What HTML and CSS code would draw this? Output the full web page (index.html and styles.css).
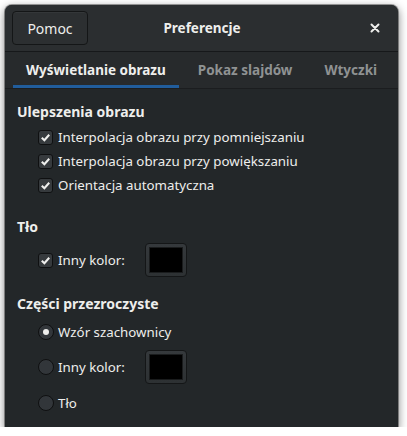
FILE: index.html
```html
<!DOCTYPE html>
<html lang="pl">
<head>
<meta charset="utf-8">
<title>Preferencje</title>
<link rel="stylesheet" href="styles.css">
</head>
<body>
<div class="window">
  <header class="headerbar">
    <button class="btn">Pomoc</button>
    <div class="title">Preferencje</div>
    <button class="close" aria-label="Zamknij">
      <svg width="10" height="10" viewBox="0 0 10 10"><path d="M1.5 1.5 L8.5 8.5 M8.5 1.5 L1.5 8.5" stroke="#eeeeec" stroke-width="2" stroke-linecap="round"/></svg>
    </button>
  </header>
  <nav class="tabs">
    <div class="tab active">Wyświetlanie obrazu</div>
    <div class="tab">Pokaz slajdów</div>
    <div class="tab">Wtyczki</div>
  </nav>
  <main class="content">
    <section class="group g-enh">
      <h2 class="heading">Ulepszenia obrazu</h2>
      <div class="row"><span class="check"><svg viewBox="0 0 14 14"><path d="M3 7.2 L5.8 10 L11 4" fill="none" stroke="#eeeeec" stroke-width="2.2"/></svg></span>Interpolacja obrazu przy pomniejszaniu</div>
      <div class="row"><span class="check"><svg viewBox="0 0 14 14"><path d="M3 7.2 L5.8 10 L11 4" fill="none" stroke="#eeeeec" stroke-width="2.2"/></svg></span>Interpolacja obrazu przy powiększaniu</div>
      <div class="row"><span class="check"><svg viewBox="0 0 14 14"><path d="M3 7.2 L5.8 10 L11 4" fill="none" stroke="#eeeeec" stroke-width="2.2"/></svg></span>Orientacja automatyczna</div>
    </section>
    <section class="group g-bg">
      <h2 class="heading">Tło</h2>
      <div class="row tall"><span class="check"><svg viewBox="0 0 14 14"><path d="M3 7.2 L5.8 10 L11 4" fill="none" stroke="#eeeeec" stroke-width="2.2"/></svg></span><span class="lbl">Inny kolor:</span><span class="color"><span class="swatch"></span></span></div>
    </section>
    <section class="group g-tr">
      <h2 class="heading">Części przezroczyste</h2>
      <div class="row radio-row"><span class="radio on"><span class="dot"></span></span>Wzór szachownicy</div>
      <div class="row tall2"><span class="radio"></span><span class="lbl">Inny kolor:</span><span class="color"><span class="swatch"></span></span></div>
      <div class="row radio-row"><span class="radio"></span>Tło</div>
    </section>
  </main>
</div>
</body>
</html>
```
FILE: styles.css
```css
* { box-sizing: border-box; }
html, body { margin: 0; padding: 0; background: #ffffff; }
body { font-family: "Noto Sans", "DejaVu Sans", sans-serif; font-size: 13.3px; color: #eeeeec; }

.window {
  margin: 5px 0 0 5px;
  width: 393px;
  height: 422px;
  background: #232729;
  border-radius: 7px 7px 0 0;
  box-shadow: 0 3px 9px 1px rgba(0,0,0,0.45), 0 0 0 1px rgba(0,0,0,0.35);
  overflow: hidden;
  display: flex;
  flex-direction: column;
}

.headerbar {
  flex: 0 0 47px;
  background: #2b2e30;
  border-bottom: 1px solid #16181a;
  display: grid;
  grid-template-columns: 1fr auto 1fr;
  align-items: center;
  padding: 0 6px 0 7px;
}
.btn {
  justify-self: start;
  width: 76px;
  height: 34px;
  background: #2c2f31;
  border: 1px solid #141617;
  border-radius: 4px;
  color: #eeeeec;
  font: inherit;
  font-size: 14px;
  box-shadow: inset 0 1px rgba(255,255,255,0.04);
}
.title { font-weight: bold; font-size: 13.5px; }
.close {
  justify-self: end;
  width: 34px; height: 34px;
  background: none; border: none; padding: 0;
  display: flex; align-items: center; justify-content: center;
}

.tabs {
  flex: 0 0 37px;
  background: #272a2c;
  border-bottom: 1px solid #1b1d1f;
  display: flex;
  padding: 0 0 0 8px;
}
.tab {
  font-weight: bold;
  font-size: 13.5px;
  color: #8f9293;
  padding: 3px 13px 0 13px;
  display: flex;
  align-items: center;
  border-bottom: 3px solid transparent;
}
.tab.active { color: #eeeeec; border-bottom-color: #215d9c; }
.tab + .tab { margin-left: 6px; }

.content { padding: 12px 12px 0 12px; }
.g-enh { margin-bottom: 19px; }
.g-bg { margin-bottom: 13px; }
.heading {
  margin: 0 0 2px 0;
  font-size: 14px;
  font-weight: bold;
  line-height: 22px;
}
.row {
  display: flex;
  align-items: center;
  height: 24px;
  padding-left: 21px;
  white-space: nowrap;
}
.row.tall { height: 40px; }
.row.tall2 { height: 42px; }
.radio-row { height: 29px; }
.check {
  width: 15px; height: 15px;
  border: 1px solid #0f1011;
  background: #363a3d;
  border-radius: 3px;
  margin-right: 5px;
  display: inline-flex;
  flex: 0 0 auto;
}
.check svg { width: 13px; height: 13px; }
.radio {
  width: 16px; height: 16px;
  border: 1px solid #0f1011;
  background: #32363a;
  border-radius: 50%;
  margin-right: 4px;
  display: inline-flex;
  align-items: center;
  justify-content: center;
  flex: 0 0 auto;
}
.radio .dot { width: 6px; height: 6px; border-radius: 50%; background: #eeeeec; }
.lbl { width: 87px; }
.color {
  width: 42px; height: 34px;
  border: 1px solid #141617;
  border-radius: 4px;
  background: linear-gradient(#35393c, #2d3133);
  display: flex;
  align-items: center;
  justify-content: center;
}
.swatch { width: 34px; height: 26px; background: #000; border: 1px solid #1a1c1d; }
```
